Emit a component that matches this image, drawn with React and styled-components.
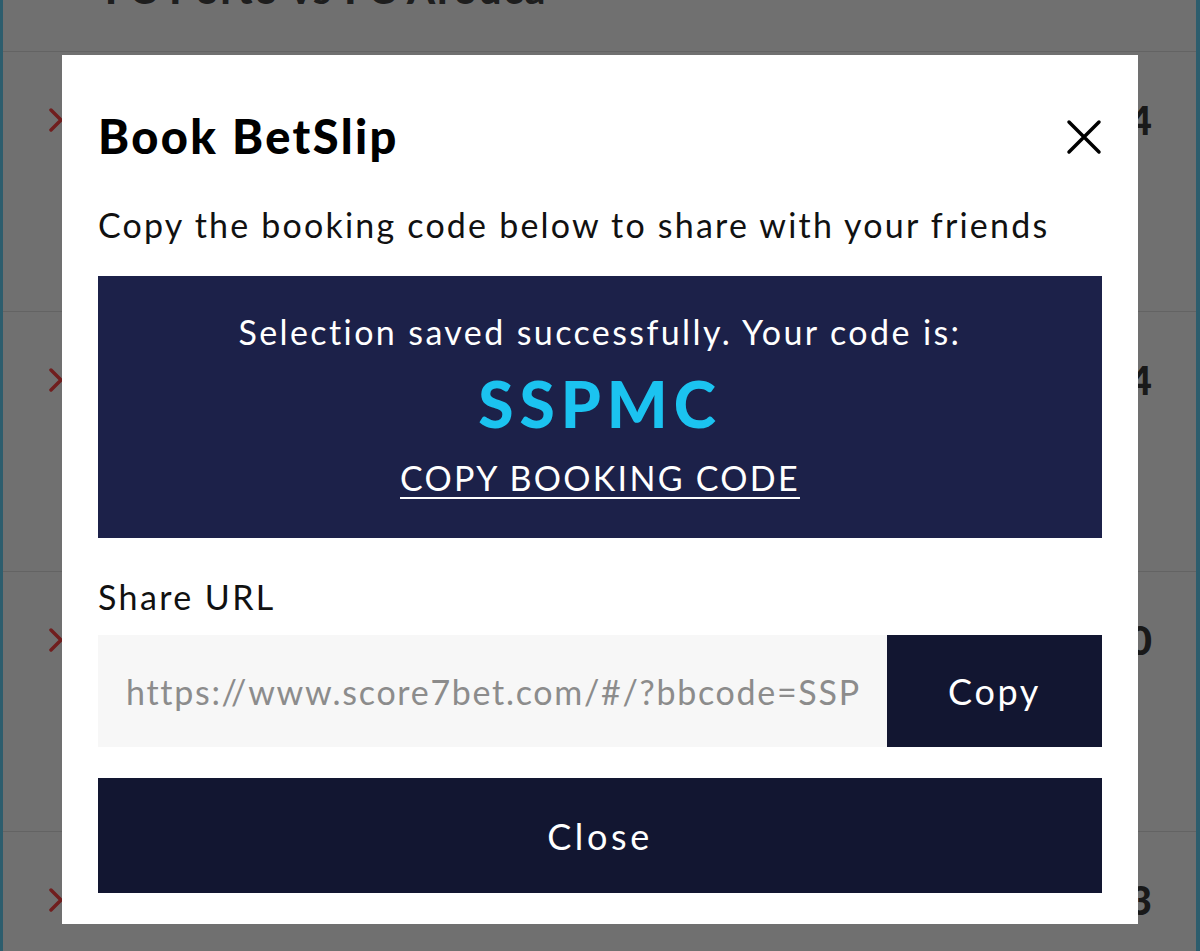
import React from "react"
import styled, { createGlobalStyle } from "styled-components"

const GlobalStyle = createGlobalStyle`
html, body {
  margin: 0;
  padding: 0;
  height: 100%;
  overflow: hidden;
}
body {
  font-family: Lato, "Open Sans", sans-serif;
  background: #66d4f8;
}
`

const Page = styled.div`
margin: 0 4px 0 3px;
height: 951px;
background: #ffffff;
overflow: hidden;
`

const MatchTitle = styled.div`
height: 52px;
box-sizing: border-box;
border-bottom: 1px solid #e2e2e2;
padding-left: 102px;
display: flex;
align-items: flex-start;
`

const MatchName = styled.h2`
margin: -33px 0 0;
font-size: 40px;
line-height: 44px;
font-weight: 900;
letter-spacing: 2px;
color: #444;
`

const MarketRow = styled.div`
height: 260px;
border-bottom: 1px solid #e2e2e2;
display: flex;
justify-content: space-between;
align-items: flex-start;
padding: 48px 44px 0 45px;
box-sizing: border-box;
`

const Chevron = styled.svg`
margin-top: 8px;
`

const Odds = styled.span`
font-size: 40px;
font-weight: 900;
color: #3a3a3a;
line-height: 1;
`

const Overlay = styled.div`
position: fixed;
inset: 0;
background: rgba(0, 0, 0, 0.56);
display: flex;
justify-content: center;
align-items: flex-start;
padding-top: 55px;
`

const Modal = styled.div`
width: 1076px;
background: #fff;
box-sizing: border-box;
padding: 0 36px 31px;
display: flex;
flex-direction: column;
letter-spacing: 2.3px;
`

const Header = styled.div`
display: flex;
justify-content: space-between;
align-items: center;
height: 164px;
`

const Title = styled.h1`
margin: 0;
font-size: 47px;
font-weight: 900;
color: #000;
letter-spacing: 2.4px;
position: relative;
top: -1px;
`

const CloseIcon = styled.button`
width: 36px;
height: 36px;
padding: 0;
border: none;
background: none;
cursor: pointer;
display: flex;
align-items: center;
justify-content: center;
`

const Subtitle = styled.p`
margin: -15px 0 0;
font-size: 34px;
color: #111;
line-height: 42px;
letter-spacing: 2.2px;
`

const CodeBox = styled.div`
margin-top: 30px;
height: 262px;
background: #1c2149;
display: flex;
flex-direction: column;
align-items: center;
padding-top: 36px;
box-sizing: border-box;
color: #fff;
`

const Saved = styled.div`
font-size: 34px;
line-height: 40px;
letter-spacing: 2.4px;
`

const Code = styled.div`
font-size: 64px;
font-weight: 900;
color: #1bc3f0;
line-height: 72px;
margin-top: 16px;
letter-spacing: 6px;
`

const CopyLink = styled.a`
margin-top: 18px;
font-size: 34px;
line-height: 40px;
color: #fff;
text-decoration: underline;
text-underline-offset: 6px;
text-decoration-thickness: 2px;
letter-spacing: 2.3px;
cursor: pointer;
`

const Label = styled.div`
margin-top: 39px;
font-size: 34px;
line-height: 40px;
color: #111;
letter-spacing: 2.4px;
`

const ShareRow = styled.div`
margin-top: 18px;
display: flex;
height: 112px;
`

const UrlInput = styled.input`
flex: 1;
min-width: 0;
border: none;
outline: none;
background: #f7f7f7;
padding: 0 28px;
font-family: inherit;
font-size: 34px;
letter-spacing: 1.7px;
color: #8c8c8c;
`

const DarkButton = styled.button`
width: ${props => props.wide ? "100%" : "215px"};
height: ${props => props.wide ? "115px" : "112px"};
margin-top: ${props => props.wide ? "31px" : "0"};
border: none;
background: #121631;
color: #fff;
font-family: inherit;
font-size: 36px;
letter-spacing: ${props => props.wide ? "3.6px" : "2.6px"};
cursor: pointer;
`

const rows = ["4", "4", "0", "3"]

export default function App() {
  return (
    <>
      <GlobalStyle />
      <Page>
        <MatchTitle>
          <MatchName>FC Porto vs FC Arouca</MatchName>
        </MatchTitle>
        {rows.map((odd, i) => (
          <MarketRow key={i}>
            <Chevron width="16" height="24" viewBox="0 0 16 24">
              <path d="M3 2 L13 12 L3 22" fill="none" stroke="#ff4444" strokeWidth="3.5" strokeLinecap="round" strokeLinejoin="round" />
            </Chevron>
            <Odds>{odd}</Odds>
          </MarketRow>
        ))}
      </Page>
      <Overlay>
        <Modal>
          <Header>
            <Title>Book BetSlip</Title>
            <CloseIcon aria-label="close">
              <svg width="36" height="36" viewBox="0 0 36 36">
                <path d="M3 3 L33 33 M33 3 L3 33" stroke="#000" strokeWidth="3.5" strokeLinecap="round" />
              </svg>
            </CloseIcon>
          </Header>
          <Subtitle>Copy the booking code below to share with your friends</Subtitle>
          <CodeBox>
            <Saved>Selection saved successfully. Your code is:</Saved>
            <Code>SSPMC</Code>
            <CopyLink>COPY BOOKING CODE</CopyLink>
          </CodeBox>
          <Label>Share URL</Label>
          <ShareRow>
            <UrlInput readOnly value="https://www.score7bet.com/#/?bbcode=SSPMC" />
            <DarkButton>Copy</DarkButton>
          </ShareRow>
          <DarkButton wide>Close</DarkButton>
        </Modal>
      </Overlay>
    </>
  )
}
